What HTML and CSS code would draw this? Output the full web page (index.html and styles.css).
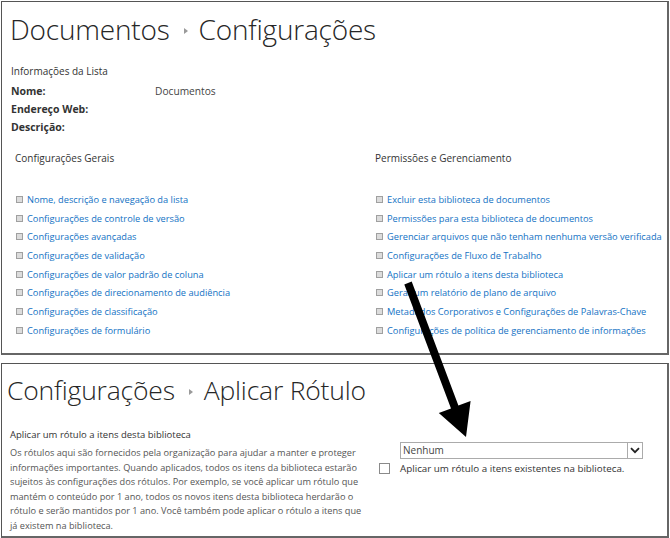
FILE: index.html
```html
<!DOCTYPE html>
<html lang="pt-BR">
<head>
<meta charset="utf-8">
<title>Configurações</title>
<link rel="stylesheet" href="styles.css">
</head>
<body>
<div class="page">
  <section class="panel panel-top">
    <h1 class="title">Documentos<span class="sep"></span>Configurações</h1>
    <div class="info">
      <div class="info-title">Informações da Lista</div>
      <div class="info-row"><span class="lbl">Nome:</span><span class="val">Documentos</span></div>
      <div class="info-row"><span class="lbl">Endereço Web:</span><span class="val"></span></div>
      <div class="info-row"><span class="lbl">Descrição:</span><span class="val"></span></div>
    </div>
    <div class="cols">
      <div class="col col-left">
        <div class="col-title">Configurações Gerais</div>
        <ul class="links">
          <li><a href="#">Nome, descrição e navegação da lista</a></li>
          <li><a href="#">Configurações de controle de versão</a></li>
          <li><a href="#">Configurações avançadas</a></li>
          <li><a href="#">Configurações de validação</a></li>
          <li><a href="#">Configurações de valor padrão de coluna</a></li>
          <li><a href="#">Configurações de direcionamento de audiência</a></li>
          <li><a href="#">Configurações de classificação</a></li>
          <li><a href="#">Configurações de formulário</a></li>
        </ul>
      </div>
      <div class="col col-right">
        <div class="col-title">Permissões e Gerenciamento</div>
        <ul class="links">
          <li><a href="#">Excluir esta biblioteca de documentos</a></li>
          <li><a href="#">Permissões para esta biblioteca de documentos</a></li>
          <li><a href="#">Gerenciar arquivos que não tenham nenhuma versão verificada</a></li>
          <li><a href="#">Configurações de Fluxo de Trabalho</a></li>
          <li><a href="#">Aplicar um rótulo a itens desta biblioteca</a></li>
          <li><a href="#">Gerar um relatório de plano de arquivo</a></li>
          <li><a href="#">Metadados Corporativos e Configurações de Palavras-Chave</a></li>
          <li><a href="#">Configurações de política de gerenciamento de informações</a></li>
        </ul>
      </div>
    </div>
  </section>

  <section class="panel panel-bottom">
    <h1 class="title title-b">Configurações<span class="sep"></span>Aplicar Rótulo</h1>
    <div class="form">
      <div class="desc">
        <div class="desc-title">Aplicar um rótulo a itens desta biblioteca</div>
        <p class="desc-text">Os rótulos aqui são fornecidos pela organização para ajudar a manter e proteger<br>informações importantes. Quando aplicados, todos os itens da biblioteca estarão<br>sujeitos às configurações dos rótulos. Por exemplo, se você aplicar um rótulo que<br>mantém o conteúdo por 1 ano, todos os novos itens desta biblioteca herdarão o<br>rótulo e serão mantidos por 1 ano. Você também pode aplicar o rótulo a itens que<br>já existem na biblioteca.</p>
      </div>
      <div class="controls">
        <div class="select">
          <span class="select-val">Nenhum</span>
          <span class="select-btn"><svg width="10" height="7" viewBox="0 0 10 7"><path d="M1 1.2 L5 5.2 L9 1.2" fill="none" stroke="#222" stroke-width="1.8"/></svg></span>
        </div>
        <div class="check"><span class="box"></span><span class="check-label">Aplicar um rótulo a itens existentes na biblioteca.</span></div>
      </div>
    </div>
  </section>

  <svg class="arrow" width="670" height="538" viewBox="0 0 670 538">
    <polygon points="411.7,281.6 404.3,284.4 451,408.4 438.8,413 466,437 470.6,401 458.4,405.6" fill="#000"/>
  </svg>
</div>
</body>
</html>
```

FILE: styles.css
```css
* { box-sizing: border-box; }
html, body { margin: 0; padding: 0; background: #fff; }
body {
  font-family: "Open Sans", "Noto Sans", "Liberation Sans", sans-serif;
  color: #444;
  width: 670px;
  height: 538px;
  overflow: hidden;
}
.page {
  position: relative;
  padding: 1px 1px 0 1px;
  display: flex;
  flex-direction: column;
  gap: 8px;
}
.panel {
  border: 1px solid #555;
  border-right: 2px solid #666;
  border-bottom: 2px solid #666;
  background: #fff;
}
.panel-top { height: 354px; }
.panel-bottom { height: 175px; }

.title {
  margin: 0;
  font-weight: 300;
  font-size: 28px;
  line-height: 36px;
  color: #262626;
  padding: 6px 0 0 8px;
  height: 48px;
  display: flex;
  align-items: center;
  letter-spacing: -0.2px;
}
.title-b { padding: 4px 0 0 5px; font-size: 26.5px; }
.sep {
  display: inline-block;
  width: 0; height: 0;
  border-left: 4px solid #9a9a9a;
  border-top: 3.5px solid transparent;
  border-bottom: 3.5px solid transparent;
  margin: 4px 11px 0 14px;
}

.info { padding: 12px 0 0 9px; font-size: 10.5px; }
.info-title { height: 18px; line-height: 18px; color: #333; margin-bottom: 2px; font-size: 10px; }
.info-row { display: flex; height: 18px; line-height: 18px; }
.lbl { width: 144px; font-weight: 700; color: #333; }
.val { color: #444; font-size: 10.2px; }

.cols { display: flex; padding: 13px 0 0 13px; }
.col { flex: none; }
.col-left { width: 360px; }
.col-right { flex: 1; }
.col-title { font-size: 10px; color: #333; height: 18px; line-height: 18px; margin-bottom: 23px; }

.links { list-style: none; margin: 0; padding: 0; }
.links li {
  display: flex;
  align-items: center;
  height: 18.7px;
  font-size: 9.25px;
  white-space: nowrap;
}
.links li::before {
  content: "";
  width: 5px; height: 5px;
  border: 1px solid #a0a0a0;
  background: #dcdcdc;
  margin: 0 4px 0 1px;
  flex: none;
}
.links a { color: #1372c4; text-decoration: none; }

.form { display: flex; padding: 14px 0 0 8px; }
.desc { width: 369px; flex: none; }
.desc-title { font-size: 9.5px; color: #333; height: 18px; line-height: 18px; }
.desc-text {
  margin: 2px 0 0 0;
  font-size: 9.2px;
  line-height: 14.5px;
  color: #555;
  white-space: nowrap;
}
.controls { padding: 16px 0 0 0; }
.select {
  display: flex;
  align-items: center;
  width: 243px;
  height: 17px;
  margin-left: 21px;
  border: 1px solid #ababab;
  background: #fff;
}
.select-val { flex: 1; font-size: 10px; color: #444; padding-left: 2px; line-height: 15px; }
.select-btn {
  width: 15px; height: 15px;
  border-left: 1px solid #ababab;
  display: flex; align-items: center; justify-content: center;
}
.check { display: flex; align-items: center; margin-top: 3px; }
.box {
  width: 11px; height: 11px;
  border: 1px solid #8a8a8a;
  background: #fff;
  margin-right: 10px;
  flex: none;
}
.check-label { font-size: 9.8px; color: #333; }

.arrow { position: absolute; left: 0; top: 0; pointer-events: none; }
```
